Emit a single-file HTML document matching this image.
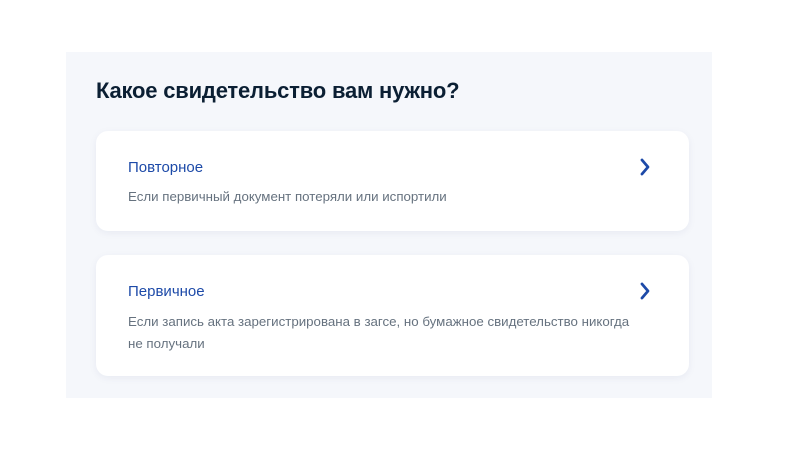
<!DOCTYPE html>
<html><head><meta charset="utf-8"><style>
html,body{margin:0;padding:0;background:#fff;width:790px;height:464px;overflow:hidden;font-family:"Liberation Sans",sans-serif}
.panel{position:absolute;left:66px;top:52px;width:646px;height:346px;background:#f5f7fb}
h1{position:absolute;left:96px;top:78px;margin:0;font-size:22px;font-weight:bold;color:#0b1f33;letter-spacing:-0.2px}
.card{position:absolute;left:96px;width:593px;background:#fff;border-radius:12px;box-shadow:0 2px 8px rgba(0,40,100,0.06)}
.t{position:absolute;left:32px;font-size:15px;color:#1d4aa8}
.d{position:absolute;left:32px;font-size:13.3px;color:#66727f;line-height:22px;width:506px}
svg{position:absolute;left:542px}
</style></head><body>
<div class="panel"></div>
<h1>Какое свидетельство вам нужно?</h1>
<div class="card" style="top:131px;height:100px">
<div class="t" style="top:28px">Повторное</div>
<div class="d" style="top:55px">Если первичный документ потеряли или испортили</div>
<svg style="top:27px" width="14" height="18" viewBox="0 0 14 18"><path d="M4 2 L10 9 L4 16" fill="none" stroke="#1d4aa8" stroke-width="2.8" stroke-linecap="round" stroke-linejoin="round"/></svg>
</div>
<div class="card" style="top:255px;height:121px">
<div class="t" style="top:28px">Первичное</div>
<div class="d" style="top:56px">Если запись акта зарегистрирована в загсе, но бумажное свидетельство никогда не получали</div>
<svg style="top:27px" width="14" height="18" viewBox="0 0 14 18"><path d="M4 2 L10 9 L4 16" fill="none" stroke="#1d4aa8" stroke-width="2.8" stroke-linecap="round" stroke-linejoin="round"/></svg>
</div>
</body></html>
